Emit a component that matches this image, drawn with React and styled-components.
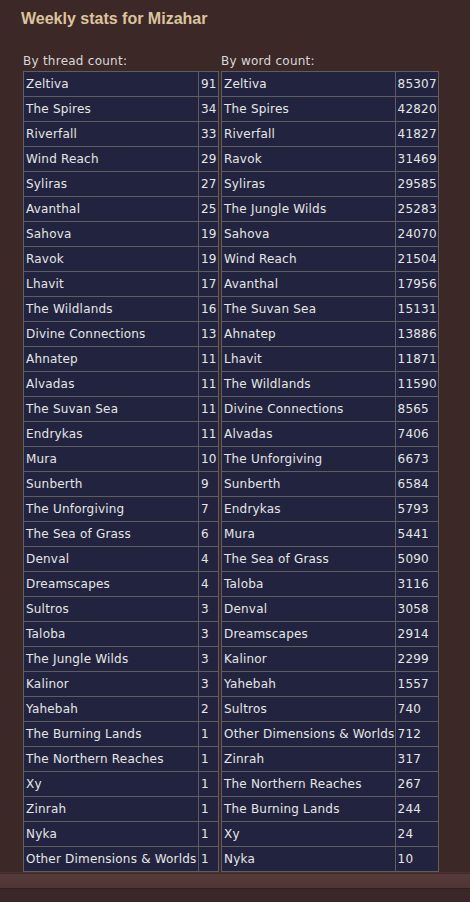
import React from 'react'
import styled, { createGlobalStyle } from 'styled-components'

const GlobalStyle = createGlobalStyle`
  html, body {
    margin: 0;
    padding: 0;
    background: #3d2828;
  }
  body {
    font-family: "DejaVu Sans", "Liberation Sans", sans-serif;
    color: #e4e4e4;
  }
`

const Page = styled.div`
  width: 470px;
  height: 902px;
  display: flex;
  flex-direction: column;
  background: #3d2828;
`

const Content = styled.div`
  padding: 10px 0 0 21px;
`

const Title = styled.h1`
  margin: 0 0 25px 0;
  font-family: "Liberation Sans", Arial, sans-serif;
  font-size: 16px;
  line-height: 18px;
  font-weight: bold;
  color: #dcc49c;
`

const Columns = styled.div`
  display: flex;
  gap: 2px;
  padding-left: 2px;
`

const Column = styled.div`
  display: flex;
  flex-direction: column;
`

const Label = styled.div`
  font-size: 12px;
  line-height: 17px;
  height: 18px;
  letter-spacing: 0.25px;
  color: #d8d8d8;
`

const Table = styled.table`
  border-collapse: collapse;
  border: 1px solid #5d5d62;
  background: #22243f;
  width: ${props => props.width}px;
`

const Row = styled.tr`
  height: 25px;
`

const Name = styled.td`
  border: 1px solid #5d5d62;
  font-size: 12px;
  letter-spacing: 0.2px;
  padding: 0 0 0 2px;
  white-space: nowrap;
  color: #e6e6e6;
`

const Num = styled.td`
  border: 1px solid #5d5d62;
  font-size: 12px;
  letter-spacing: 0.2px;
  padding: 0 1px 0 2px;
  width: ${props => props.w}px;
  text-align: left;
  box-sizing: border-box;
  color: #e6e6e6;
`

const Footer = styled.div`
  flex: 1;
  display: flex;
  flex-direction: column;
`

const FooterTop = styled.div`
  height: 1px;
  background: #3f2929;
  border-top: 1px solid #4a3232;
`

const FooterBand = styled.div`
  height: 14px;
  background: linear-gradient(#563b3b, #4f3434);
  border-bottom: 1px solid #2f1f1f;
`

const FooterBottom = styled.div`
  flex: 1;
  background: #3b2727;
`

const byThread = [
  ['Zeltiva', 91], ['The Spires', 34], ['Riverfall', 33], ['Wind Reach', 29],
  ['Syliras', 27], ['Avanthal', 25], ['Sahova', 19], ['Ravok', 19],
  ['Lhavit', 17], ['The Wildlands', 16], ['Divine Connections', 13], ['Ahnatep', 11],
  ['Alvadas', 11], ['The Suvan Sea', 11], ['Endrykas', 11], ['Mura', 10],
  ['Sunberth', 9], ['The Unforgiving', 7], ['The Sea of Grass', 6], ['Denval', 4],
  ['Dreamscapes', 4], ['Sultros', 3], ['Taloba', 3], ['The Jungle Wilds', 3],
  ['Kalinor', 3], ['Yahebah', 2], ['The Burning Lands', 1], ['The Northern Reaches', 1],
  ['Xy', 1], ['Zinrah', 1], ['Nyka', 1], ['Other Dimensions & Worlds', 1],
]

const byWord = [
  ['Zeltiva', 85307], ['The Spires', 42820], ['Riverfall', 41827], ['Ravok', 31469],
  ['Syliras', 29585], ['The Jungle Wilds', 25283], ['Sahova', 24070], ['Wind Reach', 21504],
  ['Avanthal', 17956], ['The Suvan Sea', 15131], ['Ahnatep', 13886], ['Lhavit', 11871],
  ['The Wildlands', 11590], ['Divine Connections', 8565], ['Alvadas', 7406], ['The Unforgiving', 6673],
  ['Sunberth', 6584], ['Endrykas', 5793], ['Mura', 5441], ['The Sea of Grass', 5090],
  ['Taloba', 3116], ['Denval', 3058], ['Dreamscapes', 2914], ['Kalinor', 2299],
  ['Yahebah', 1557], ['Sultros', 740], ['Other Dimensions & Worlds', 712], ['Zinrah', 317],
  ['The Northern Reaches', 267], ['The Burning Lands', 244], ['Xy', 24], ['Nyka', 10],
]

const StatTable = ({ label, rows, width, numWidth }) => (
  <Column>
    <Label>{label}</Label>
    <Table width={width}>
      <tbody>
        {rows.map(([name, count]) => (
          <Row key={name}>
            <Name>{name}</Name>
            <Num w={numWidth}>{count}</Num>
          </Row>
        ))}
      </tbody>
    </Table>
  </Column>
)

const App = () => (
  <Page>
    <GlobalStyle />
    <Content>
      <Title>Weekly stats for Mizahar</Title>
      <Columns>
        <StatTable label="By thread count:" rows={byThread} width={196} numWidth={20} />
        <StatTable label="By word count:" rows={byWord} width={217} numWidth={41} />
      </Columns>
    </Content>
    <Footer>
      <FooterTop />
      <FooterBand />
      <FooterBottom />
    </Footer>
  </Page>
)

export default App
